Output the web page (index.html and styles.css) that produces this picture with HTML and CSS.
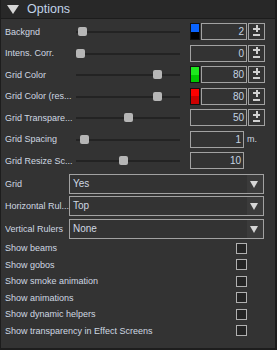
FILE: index.html
```html
<!DOCTYPE html>
<html lang="en">
<head>
  <meta charset="UTF-8">
  <title>Options</title>
  <link rel="stylesheet" href="styles.css">
</head>
<body>

  <div class="panel">
    <!-- Cabecera -->
    <div class="head">
      <svg class="head-arrow" width="12" height="9" viewBox="0 0 12 9"><polygon points="0,0 12,0 6,9" fill="#d6d6d6"/></svg>
      <span>Options</span>
    </div>

    <div class="body">
      <!-- Sliders -->
      <div class="row">
        <span class="lbl">Backgnd</span>
        <div class="slider"><span class="thumb" style="left:2px"></span></div>
        <div class="val">
          <span class="swatch"><i style="background:#0a64ff"></i><i style="background:#000"></i></span>
          <span class="num">2</span>
          <span class="spin"></span>
        </div>
      </div>
      <div class="row">
        <span class="lbl">Intens. Corr.</span>
        <div class="slider"><span class="thumb" style="left:0px"></span></div>
        <div class="val">
          <span class="num">0</span>
          <span class="spin"></span>
        </div>
      </div>
      <div class="row">
        <span class="lbl">Grid Color</span>
        <div class="slider"><span class="thumb" style="left:77px"></span></div>
        <div class="val">
          <span class="swatch"><i style="background:#1ee81e"></i><i style="background:#00c800"></i></span>
          <span class="num">80</span>
          <span class="spin"></span>
        </div>
      </div>
      <div class="row">
        <span class="lbl">Grid Color (res...</span>
        <div class="slider"><span class="thumb" style="left:77px"></span></div>
        <div class="val">
          <span class="swatch"><i style="background:#ff0000"></i><i style="background:#cc0000"></i></span>
          <span class="num">80</span>
          <span class="spin"></span>
        </div>
      </div>
      <div class="row">
        <span class="lbl">Grid Transpare...</span>
        <div class="slider"><span class="thumb" style="left:48px"></span></div>
        <div class="val">
          <span class="num">50</span>
          <span class="spin"></span>
        </div>
      </div>
      <div class="row">
        <span class="lbl">Grid Spacing</span>
        <div class="slider"><span class="thumb" style="left:4px"></span></div>
        <div class="val">
          <span class="num">1</span>
          <span class="unit">m.</span>
        </div>
      </div>
      <div class="row">
        <span class="lbl">Grid Resize Sc...</span>
        <div class="slider"><span class="thumb" style="left:43px"></span></div>
        <div class="val">
          <span class="num">10</span>
          <span class="unit"></span>
        </div>
      </div>

      <!-- Desplegables -->
      <div class="drops">
        <div class="drop-row">
          <span class="drop-lbl">Grid</span>
          <div class="drop"><span class="drop-txt">Yes</span><span class="drop-btn"></span></div>
        </div>
        <div class="drop-row">
          <span class="drop-lbl">Horizontal Rul...</span>
          <div class="drop"><span class="drop-txt">Top</span><span class="drop-btn"></span></div>
        </div>
        <div class="drop-row">
          <span class="drop-lbl">Vertical Rulers</span>
          <div class="drop"><span class="drop-txt">None</span><span class="drop-btn"></span></div>
        </div>
      </div>

      <!-- Casillas -->
      <div class="check"><span>Show beams</span><span class="box"></span></div>
      <div class="check"><span>Show gobos</span><span class="box"></span></div>
      <div class="check"><span>Show smoke animation</span><span class="box"></span></div>
      <div class="check"><span>Show animations</span><span class="box"></span></div>
      <div class="check"><span>Show dynamic helpers</span><span class="box"></span></div>
      <div class="check"><span>Show transparency in Effect Screens</span><span class="box"></span></div>
    </div>
  </div>

</body>
</html>
```

FILE: styles.css
```css
body {
  margin: 0;
  padding: 0;
  background-color: #333333;
}

.panel {
  width: 277px;
  height: 350px;
  box-sizing: border-box;
  background-color: #333333;
  border-left: 1px solid #1d1d1d;
  border-right: 2px solid #1d1d1d;
  border-bottom: 2px solid #1d1d1d;
  font-family: "Liberation Sans", Arial, sans-serif;
  font-size: 9px;
  color: #cfd8e2;
}

/* Cabecera */
.head {
  height: 18px;
  background-color: #282828;
  border-bottom: 1px solid #1c1c1c;
  display: flex;
  align-items: center;
  padding-left: 6px;
  font-size: 12.5px;
  color: #c0d3e8;
}

.head-arrow {
  margin-right: 8px;
}

.body {
  padding: 2px 0 0 4px;
}

/* Filas con slider */
.row {
  height: 21.5px;
  display: flex;
  align-items: center;
}

.lbl {
  width: 71px;
  white-space: nowrap;
  overflow: hidden;
}

.slider {
  width: 104px;
  height: 9px;
  margin-right: 10px;
  position: relative;
}

.slider::before {
  content: "";
  position: absolute;
  left: 0;
  right: 0;
  top: 4px;
  height: 2px;
  background-color: #232323;
}

.thumb {
  position: absolute;
  top: 0;
  width: 9px;
  height: 9px;
  border-radius: 2px;
  background-color: #b6b6b6;
}

.val {
  width: 75px;
  height: 17px;
  display: flex;
}

.swatch {
  width: 10px;
  height: 17px;
  box-sizing: border-box;
  border: 1px solid #111;
  margin-right: 1px;
  display: flex;
  flex-direction: column;
}

.swatch i {
  flex: 1;
}

.num {
  flex: 1;
  box-sizing: border-box;
  border: 1px solid #a2a2a2;
  padding-right: 2px;
  text-align: right;
  line-height: 15px;
  font-size: 10px;
  color: #c4d3e3;
}

.spin {
  width: 17px;
  box-sizing: border-box;
  border: 1px solid #a2a2a2;
  margin-left: 1px;
  position: relative;
}

/* + y - dibujados con pseudo elementos */
.spin::before {
  content: "";
  position: absolute;
  left: 4px;
  top: 1px;
  width: 7px;
  height: 7px;
  background:
    linear-gradient(#d0d0d0, #d0d0d0) center / 2px 7px no-repeat,
    linear-gradient(#d0d0d0, #d0d0d0) center / 7px 2px no-repeat;
}

.spin::after {
  content: "";
  position: absolute;
  left: 4px;
  top: 10px;
  width: 7px;
  height: 2px;
  background-color: #d0d0d0;
}

.unit {
  width: 18px;
  padding-left: 3px;
  line-height: 17px;
}

/* Desplegables */
.drops {
  margin-top: 1px;
}

.drop-row {
  height: 22.5px;
  display: flex;
  align-items: center;
}

.drop-lbl {
  width: 64px;
  white-space: nowrap;
  overflow: hidden;
}

.drop {
  width: 195px;
  height: 20px;
  box-sizing: border-box;
  border: 1px solid #a2a2a2;
  display: flex;
}

.drop-txt {
  flex: 1;
  padding-left: 3px;
  line-height: 18px;
  font-size: 10px;
}

.drop-btn {
  width: 16px;
  background-color: #3b3b3b;
  position: relative;
}

.drop-btn::after {
  content: "";
  position: absolute;
  left: 3px;
  top: 6px;
  border-left: 4.5px solid transparent;
  border-right: 4.5px solid transparent;
  border-top: 7px solid #d6d6d6;
}

/* Casillas */
.check {
  height: 16.5px;
  display: flex;
  justify-content: space-between;
  align-items: center;
  padding-right: 28px;
  white-space: nowrap;
}

.box {
  width: 11px;
  height: 11px;
  box-sizing: border-box;
  border: 1px solid #b0b0b0;
  background-color: #242424;
}
```
